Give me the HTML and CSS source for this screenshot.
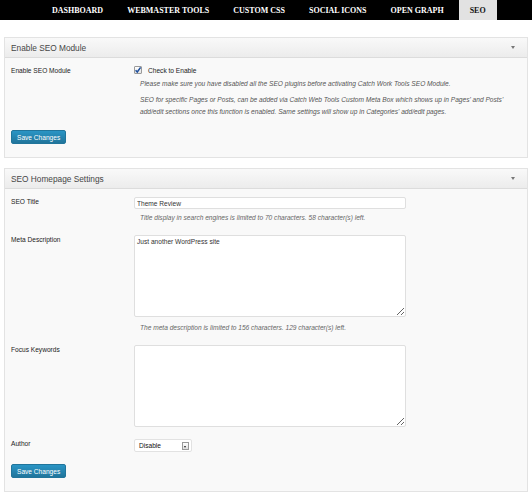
FILE: index.html
```html
<!DOCTYPE html>
<html lang="en">
  <head>
    <meta charset="UTF-8" />
    <title>Catch Web Tools - SEO</title>
    <link rel="stylesheet" href="styles.css">
  </head>
  <body>
    <nav class="tabs">
      <a class="tab">Dashboard</a>
      <a class="tab">Webmaster Tools</a>
      <a class="tab">Custom CSS</a>
      <a class="tab">Social Icons</a>
      <a class="tab">Open Graph</a>
      <a class="tab tab-active">SEO</a>
    </nav>

    <div class="wrap">
      <div class="postbox">
        <div class="postbox-head">
          <h3>Enable SEO Module</h3>
          <span class="toggle"></span>
        </div>
        <div class="postbox-body">
          <div class="row">
            <div class="row-label">Enable SEO Module</div>
            <div class="row-field">
              <label class="check">
                <span class="check-box">
                  <svg width="8" height="8" viewBox="0 0 8 8">
                    <path d="M1.6 4.2 L3.3 6 L6.6 1.4" fill="none" stroke="#1e4f9c" stroke-width="1.5" />
                  </svg>
                </span>
                Check to Enable
              </label>
              <p class="note note-first">Please make sure you have disabled all the SEO plugins before activating Catch Work Tools SEO Module.</p>
              <p class="note">SEO for specific Pages or Posts, can be added via Catch Web Tools Custom Meta Box which shows up in Pages' and Posts' add/edit sections once this function is enabled. Same settings will show up in Categories' add/edit pages.</p>
            </div>
          </div>
          <button class="btn-primary">Save Changes</button>
        </div>
      </div>

      <div class="postbox">
        <div class="postbox-head">
          <h3>SEO Homepage Settings</h3>
          <span class="toggle"></span>
        </div>
        <div class="postbox-body">
          <div class="row">
            <div class="row-label">SEO Title</div>
            <div class="row-field">
              <input class="text-input" type="text" value="Theme Review" />
              <p class="hint">Title display in search engines is limited to 70 characters. 58 character(s) left.</p>
            </div>
          </div>
          <div class="row">
            <div class="row-label">Meta Description</div>
            <div class="row-field">
              <textarea class="text-area">Just another WordPress site</textarea>
              <p class="hint">The meta description is limited to 156 characters. 129 character(s) left.</p>
            </div>
          </div>
          <div class="row">
            <div class="row-label">Focus Keywords</div>
            <div class="row-field">
              <textarea class="text-area"></textarea>
            </div>
          </div>
          <div class="row">
            <div class="row-label">Author</div>
            <div class="row-field">
              <div class="select">
                <span>Disable</span>
                <span class="select-arrow"></span>
              </div>
            </div>
          </div>
          <button class="btn-primary">Save Changes</button>
        </div>
      </div>
    </div>
  </body>
</html>
```

FILE: styles.css
```css
* {
  box-sizing: border-box;
}
html,
body {
  margin: 0;
  padding: 0;
  background: #fff;
  color: #222;
  font-family: 'Liberation Sans', Arial, sans-serif;
  font-size: 6.6px;
}

/* top tab bar */
.tabs {
  display: flex;
  height: 20px;
  padding-left: 40px;
  background: #000;
}
.tab {
  display: flex;
  align-items: center;
  padding: 0 12px;
  color: #fff;
  font-family: 'Liberation Serif', 'Times New Roman', serif;
  font-size: 8px;
  font-weight: bold;
  text-transform: uppercase;
}
.tab-active {
  margin-left: 3px;
  padding: 0 11px;
  background: #e2e2e2;
  color: #111;
}

.wrap {
  padding: 17px 4px 0;
}

/* collapsible boxes */
.postbox {
  margin-bottom: 10px;
  border: 1px solid #e3e3e3;
  background: #f9f9f9;
}
.postbox-head {
  display: flex;
  align-items: center;
  justify-content: space-between;
  height: 20px;
  padding: 0 12px 0 6px;
  background: linear-gradient(#f9f9f9, #ececec);
  border-bottom: 1px solid #dcdcdc;
}
.postbox-head h3 {
  margin: 0;
  font-size: 8.3px;
  font-weight: normal;
  color: #464646;
}
.toggle {
  width: 0;
  height: 0;
  border-left: 2px solid transparent;
  border-right: 2px solid transparent;
  border-top: 3px solid #777;
}
.postbox-body {
  padding: 8px 6px 13px;
}

.row {
  display: flex;
  margin-bottom: 12px;
}
.row-label {
  width: 123px;
  flex-shrink: 0;
  line-height: 9px;
}
.row-field {
  flex: 1;
}

.check {
  display: flex;
  align-items: center;
  gap: 6px;
  height: 10px;
  margin-top: -1px;
}
.check-box {
  display: flex;
  width: 8px;
  height: 8px;
  background: linear-gradient(#fff, #e4e4e4);
  border: 1px solid #9a9a9a;
  border-radius: 1px;
  align-items: center;
  justify-content: center;
}
.check-box svg {
  flex-shrink: 0;
}
.note {
  margin: 4px 0 0 6px;
  line-height: 12px;
  color: #555;
  font-style: italic;
}
.note-first {
  margin-top: 3px;
}

.text-input {
  display: block;
  width: 272px;
  height: 12px;
  padding: 0 2px;
  border: 1px solid #dfdfdf;
  border-radius: 2px;
  background: #fff;
  font: inherit;
  color: #333;
}
.text-area {
  display: block;
  width: 272px;
  height: 82px;
  padding: 2px;
  border: 1px solid #dfdfdf;
  border-radius: 2px;
  background: #fff;
  font: inherit;
  color: #333;
}
.hint {
  margin: 3px 0 0 6px;
  line-height: 11px;
  color: #666;
  font-style: italic;
}
.text-area + .hint {
  margin-top: 5px;
}

.select {
  display: flex;
  align-items: center;
  justify-content: space-between;
  width: 58px;
  height: 13px;
  padding: 0 2px 0 4px;
  border: 1px solid #e2e2e2;
  border-radius: 2px;
  background: #fff;
  color: #111;
}
.select-arrow {
  position: relative;
  width: 7px;
  height: 8px;
  background: linear-gradient(#fff, #ddd);
  border: 1px solid #999;
}
.select-arrow::after {
  content: '';
  position: absolute;
  left: 1px;
  top: 3px;
  border-left: 1.5px solid transparent;
  border-right: 1.5px solid transparent;
  border-top: 2px solid #222;
}

.btn-primary {
  display: block;
  height: 14px;
  margin-top: 1px;
  padding: 0 5px;
  border: 1px solid #21759b;
  border-radius: 2px;
  background: linear-gradient(#2a95c5, #21759b);
  color: #fff;
  font: inherit;
  cursor: pointer;
}
```
